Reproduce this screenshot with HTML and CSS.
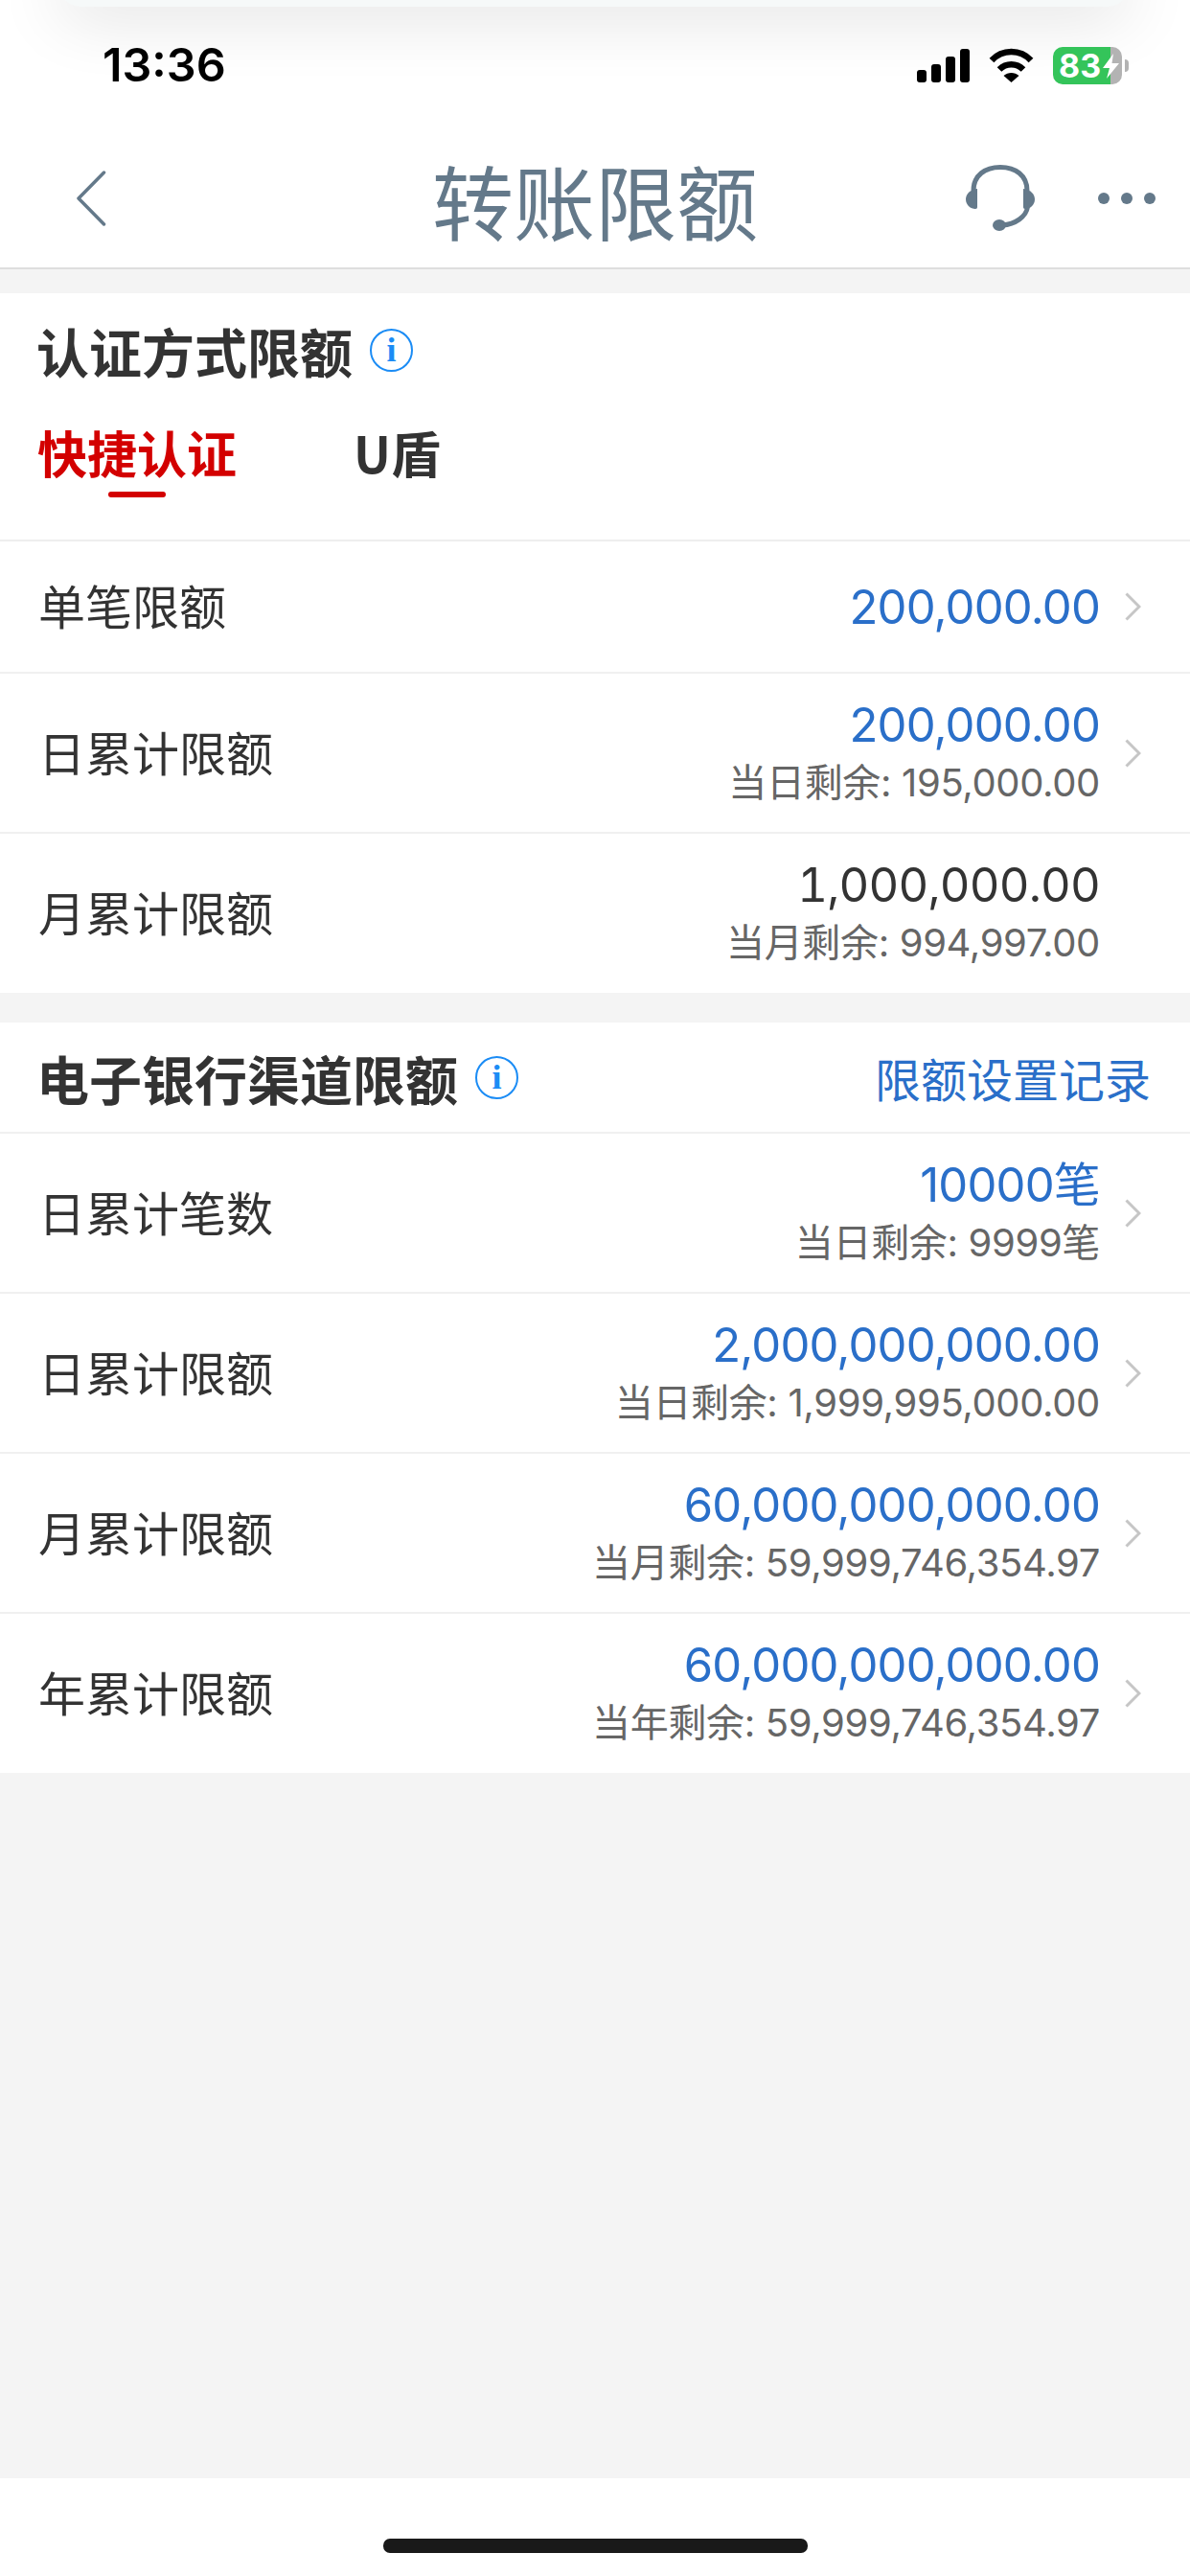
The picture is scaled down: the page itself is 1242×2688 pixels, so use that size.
FILE: index.html
```html
<!DOCTYPE html>
<html lang="zh-CN">
<head>
<meta charset="utf-8">
<title>转账限额</title>
<link rel="stylesheet" href="styles.css">
</head>
<body>
<div class="page">
  <header class="top">
    <div class="banner-edge"></div>
    <div class="status">
      <span class="time">13:36</span>
      <div class="status-icons">
        <div class="signal">
          <i class="bar b1"></i><i class="bar b2"></i><i class="bar b3"></i><i class="bar b4"></i>
        </div>
        <svg class="wifi" viewBox="0 0 47 36" width="47" height="36">
          <path d="M3 13C14 1 33 1 44 13M11 22.500C18 15.500 29 15.500 36 22.500" fill="none" stroke="#000" stroke-width="6.500"/>
          <path d="M15.500 29C20 25 27 25 31.500 29L23.500 36Z" fill="#000"/>
        </svg>
        <div class="battery">
          <div class="battery-body">
            <span class="battery-num">83</span>
            <svg class="bolt" viewBox="0 0 17 26" width="17" height="26"><path d="M11 0L0 15H7L4 26L17 10H9.500Z" fill="#fff"/></svg>
          </div>
          <i class="battery-nub"></i>
        </div>
      </div>
    </div>
    <nav class="nav">
      <svg class="back" viewBox="0 0 32 58" width="32" height="58"><path d="M29.500 2L3 29L29.500 56" fill="none" stroke="#64798a" stroke-width="3.500" stroke-linecap="round" stroke-linejoin="round"/></svg>
      <h1 class="title">转账限额</h1>
      <svg class="headset" viewBox="0 0 72 69" width="72" height="69">
        <path d="M8 27C8 11 20 2.500 36 2.500C52 2.500 64 11 64 27" fill="none" stroke="#64798a" stroke-width="5"/>
        <path d="M12 25C4 26 0 31 0 36C0 42 5 46 10 46C11.500 46 12 45 12 44Z" fill="#64798a"/>
        <path d="M60 25C68 26 72 31 72 36C72 42 67 46 62 46C60.500 46 60 45 60 44Z" fill="#64798a"/>
        <path d="M64.500 44C63 54 52 62 38 63" fill="none" stroke="#64798a" stroke-width="5"/>
        <ellipse cx="35" cy="63" rx="7" ry="6" fill="#64798a"/>
      </svg>
      <div class="more"><i></i><i></i><i></i></div>
    </nav>
  </header>

  <main class="content">
    <section class="card first">
      <div class="sec-head">
        <h2 class="sec-title">认证方式限额</h2>
        <span class="info">i</span>
      </div>
      <div class="tabs">
        <div class="tab active"><span>快捷认证</span><i class="tab-line"></i></div>
        <div class="tab"><span>U盾</span></div>
      </div>
      <div class="row single">
        <span class="label">单笔限额</span>
        <div class="vals"><div class="val blue">200,000.00</div></div>
        <svg class="chev" viewBox="0 0 17 30" width="17" height="30"><path d="M1.500 1.500L15 15L1.500 28.500" fill="none" stroke="#c6c6c6" stroke-width="3"/></svg>
      </div>
      <div class="row">
        <span class="label">日累计限额</span>
        <div class="vals"><div class="val blue">200,000.00</div><div class="sub">当日剩余: 195,000.00</div></div>
        <svg class="chev" viewBox="0 0 17 30" width="17" height="30"><path d="M1.500 1.500L15 15L1.500 28.500" fill="none" stroke="#c6c6c6" stroke-width="3"/></svg>
      </div>
      <div class="row last">
        <span class="label">月累计限额</span>
        <div class="vals"><div class="val dark">1,000,000.00</div><div class="sub">当月剩余: 994,997.00</div></div>
        <i class="chev-space"></i>
      </div>
    </section>

    <section class="card second">
      <div class="sec-head bordered">
        <h2 class="sec-title">电子银行渠道限额</h2>
        <span class="info">i</span>
        <span class="link">限额设置记录</span>
      </div>
      <div class="row">
        <span class="label">日累计笔数</span>
        <div class="vals"><div class="val blue">10000笔</div><div class="sub">当日剩余: 9999笔</div></div>
        <svg class="chev" viewBox="0 0 17 30" width="17" height="30"><path d="M1.500 1.500L15 15L1.500 28.500" fill="none" stroke="#c6c6c6" stroke-width="3"/></svg>
      </div>
      <div class="row">
        <span class="label">日累计限额</span>
        <div class="vals"><div class="val blue">2,000,000,000.00</div><div class="sub">当日剩余: 1,999,995,000.00</div></div>
        <svg class="chev" viewBox="0 0 17 30" width="17" height="30"><path d="M1.500 1.500L15 15L1.500 28.500" fill="none" stroke="#c6c6c6" stroke-width="3"/></svg>
      </div>
      <div class="row">
        <span class="label">月累计限额</span>
        <div class="vals"><div class="val blue">60,000,000,000.00</div><div class="sub">当月剩余: 59,999,746,354.97</div></div>
        <svg class="chev" viewBox="0 0 17 30" width="17" height="30"><path d="M1.500 1.500L15 15L1.500 28.500" fill="none" stroke="#c6c6c6" stroke-width="3"/></svg>
      </div>
      <div class="row last">
        <span class="label">年累计限额</span>
        <div class="vals"><div class="val blue">60,000,000,000.00</div><div class="sub">当年剩余: 59,999,746,354.97</div></div>
        <svg class="chev" viewBox="0 0 17 30" width="17" height="30"><path d="M1.500 1.500L15 15L1.500 28.500" fill="none" stroke="#c6c6c6" stroke-width="3"/></svg>
      </div>
    </section>
  </main>

  <footer class="home-area"><div class="home-bar"></div></footer>
</div>
</body>
</html>
```
FILE: styles.css
```css
* { box-sizing: border-box; margin: 0; padding: 0; }
html, body { width: 1242px; height: 2688px; overflow: hidden; }
body { font-family: Inter, "Noto Sans CJK SC", sans-serif; background: #fff; color: #333; }
i { display: block; font-style: normal; }

.page { width: 1242px; height: 2688px; display: flex; flex-direction: column; background: #f4f4f4; }

/* Top */
.top { position: relative; height: 281px; background: #fff; border-bottom: 2px solid #dedede; overflow: hidden; }
.banner-edge { position: absolute; top: -30px; left: 62px; width: 1116px; height: 37px; background: #f6f9f9; border-radius: 0 0 22px 22px; box-shadow: 0 6px 70px rgba(0, 0, 0, 0.16); }
.status { position: relative; height: 136px; display: flex; align-items: center; justify-content: space-between; padding: 0 64px 0 107px; }
.time { font-size: 48.500px; font-weight: 600; color: #000; line-height: 136px; }
.status-icons { display: flex; align-items: center; gap: 20px; }
.signal { display: flex; align-items: flex-end; gap: 5px; height: 35px; }
.bar { width: 10px; background: #000; border-radius: 3px; }
.b1 { height: 13px; }
.b2 { height: 19px; }
.b3 { height: 27px; }
.b4 { height: 35px; }
.battery { display: flex; align-items: center; gap: 3px; }
.battery-body { position: relative; width: 72px; height: 39px; border-radius: 10px; padding-left: 6px; background: linear-gradient(to right, #34c45a 60px, #b3b3b3 60px); font-size: 34px; font-weight: 700; line-height: 39px; color: #fff; }
.battery-num { display: block; }
.bolt { position: absolute; top: 7px; left: 52px; }
.battery-nub { width: 4px; height: 13px; background: #b3b3b3; border-radius: 0 4px 4px 0; }

.nav { height: 143px; display: flex; align-items: center; position: relative; padding: 0 36px 2px 79px; }
.back { flex: none; }
.title { position: absolute; left: 0; right: 0; top: 0; height: 143px; text-align: center; font-size: 85px; font-weight: 400; line-height: 143px; color: #64798a; font-family: "Noto Sans CJK SC", sans-serif; }
.headset { flex: none; margin-left: auto; position: relative; }
.more { display: flex; gap: 12px; margin-left: 66px; position: relative; }
.more i { width: 12px; height: 12px; border-radius: 50%; background: #64798a; }

/* Content */
.content { flex: 1; display: flex; flex-direction: column; gap: 31px; padding-top: 25px; }
.card { background: #fff; }
.sec-head { display: flex; align-items: center; height: 118px; padding: 0 41px 0 38px; }
.sec-head.bordered { height: 116px; border-bottom: 2px solid #f0f0f0; }
.sec-title { font-size: 55px; line-height: 64px; font-weight: 700; color: #333; font-family: "Noto Sans CJK SC", sans-serif; }
.info { width: 45px; height: 45px; margin-left: 18px; border: 2.500px solid #1b8cf5; border-radius: 50%; color: #1b8cf5; font-family: "Liberation Serif", serif; font-size: 36px; font-weight: 700; line-height: 40px; text-align: center; }
.link { margin-left: auto; font-size: 48px; line-height: 60px; color: #2a6fc9; font-family: "Noto Sans CJK SC", sans-serif; }

.tabs { display: flex; gap: 122px; height: 141px; padding: 20px 39px 0; border-bottom: 2px solid #eee; }
.tab { display: flex; flex-direction: column; align-items: center; font-size: 52px; font-weight: 700; line-height: 56px; color: #333; font-family: "Noto Sans CJK SC", sans-serif; }
.tab.active { color: #d30000; }
.tab-line { width: 60px; height: 6px; margin-top: 13px; border-radius: 3px; background: #d30000; }

.row { display: flex; align-items: center; height: 167px; padding: 0 51px 0 40px; border-bottom: 2px solid #f0f0f0; }
.row.single { height: 138px; }
.row.last { border-bottom: none; height: 166px; }
.label { font-size: 49px; line-height: 60px; padding-bottom: 4px; color: #333; font-family: "Noto Sans CJK SC", sans-serif; }
.vals { margin-left: auto; text-align: right; padding-top: 2px; }
.val { font-size: 49px; line-height: 60px; letter-spacing: -0.800px; color: #333; }
.val.blue { color: #2a6fc9; }
.val.dark { font-variant-numeric: tabular-nums; }
.sub { font-size: 40px; line-height: 60px; letter-spacing: -0.350px; color: #666; }
.chev { flex: none; margin-left: 26px; }
.chev-space { flex: none; width: 17px; margin-left: 26px; }

/* Home */
.home-area { height: 102px; background: #fff; padding-top: 63px; }
.home-bar { width: 443px; height: 15px; margin: 0 auto; background: #191919; border-radius: 7px; }
```
